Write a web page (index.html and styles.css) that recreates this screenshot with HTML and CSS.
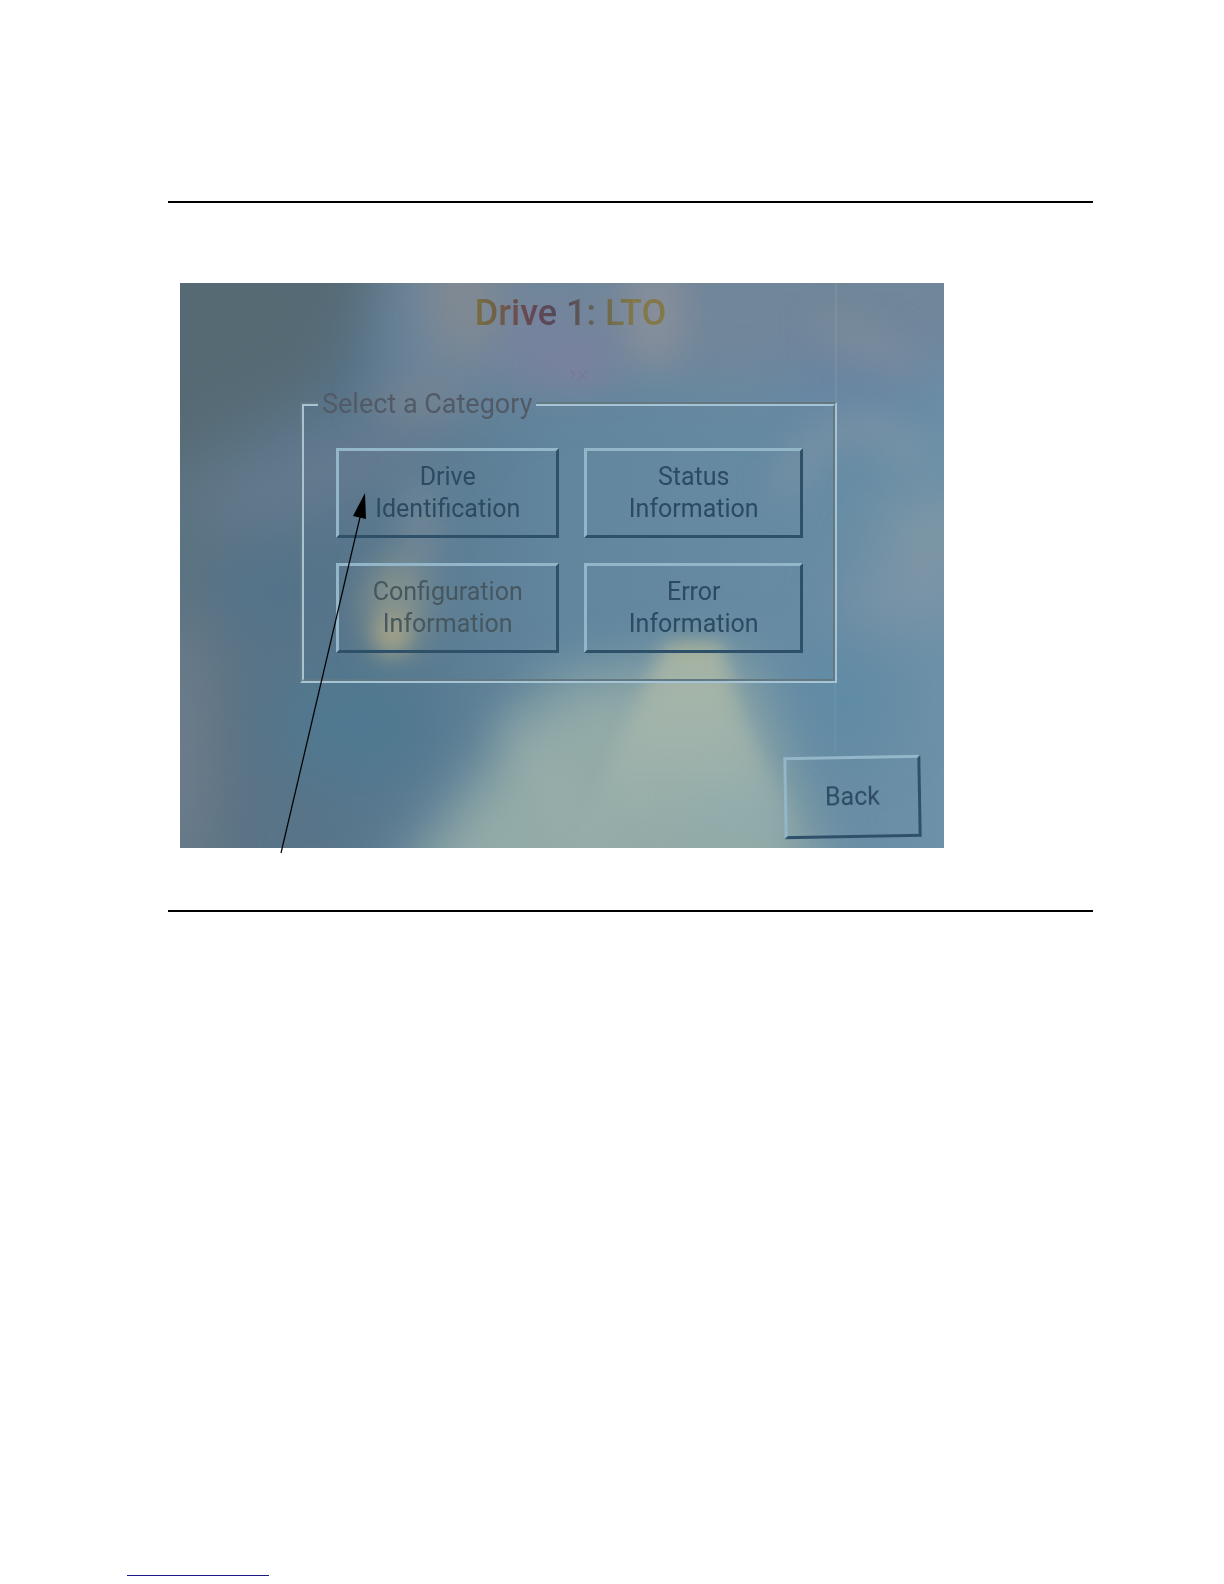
FILE: index.html
```
<!DOCTYPE html>
<html lang="en">
<head>
  <meta charset="UTF-8">
  <title>Drive 1: LTO</title>
  <meta name="viewport" content="width=device-width, initial-scale=1">
  <link rel="stylesheet" href="styles.css">
</head>
<body>

<main class="page">
  <figure class="figure">
    <div class="screen">
      <!-- sky background -->
      <svg class="sky" viewBox="0 0 764 565" preserveAspectRatio="none" aria-hidden="true">
        <defs>
          <linearGradient id="base" x1="0" y1="0" x2="1" y2="0">
            <stop offset="0" stop-color="#5c7381"/>
            <stop offset="0.2" stop-color="#58758b"/>
            <stop offset="0.5" stop-color="#61869e"/>
            <stop offset="0.85" stop-color="#678ca4"/>
            <stop offset="1" stop-color="#6c91a8"/>
          </linearGradient>
          <linearGradient id="beam" x1="0" y1="0" x2="0" y2="1">
            <stop offset="0" stop-color="#b6bda4" stop-opacity="0.75"/>
            <stop offset="0.5" stop-color="#abbaae" stop-opacity="0.5"/>
            <stop offset="1" stop-color="#a3b6b0" stop-opacity="0"/>
          </linearGradient>
          <filter id="soft" x="-60%" y="-60%" width="220%" height="220%" color-interpolation-filters="sRGB"><feGaussianBlur stdDeviation="28"/></filter>
          <filter id="mid" x="-60%" y="-60%" width="220%" height="220%" color-interpolation-filters="sRGB"><feGaussianBlur stdDeviation="18"/></filter>
          <filter id="fine" x="-60%" y="-60%" width="220%" height="220%" color-interpolation-filters="sRGB"><feGaussianBlur stdDeviation="9"/></filter>
        </defs>
        <rect width="764" height="565" fill="url(#base)"/>
        <g filter="url(#soft)">
          <path d="M-60 -60H210L150 100L-60 200Z" fill="#566a74"/>
          <path d="M200 -60H820V60L620 110L460 95L220 125Z" fill="#71869a"/>
          <ellipse cx="150" cy="185" rx="140" ry="26" fill="#687c90" transform="rotate(-20 150 185)"/>
          <ellipse cx="680" cy="100" rx="90" ry="22" fill="#6783a4"/>
          <ellipse cx="750" cy="250" rx="50" ry="35" fill="#8197a4"/>
          <ellipse cx="730" cy="315" rx="70" ry="22" fill="#8295a7"/>
          <ellipse cx="100" cy="310" rx="60" ry="40" fill="#53738a"/>
          <ellipse cx="180" cy="440" rx="80" ry="60" fill="#4f7990"/>
          <ellipse cx="660" cy="420" rx="50" ry="50" fill="#608ba5"/>
          <path d="M370 400L560 370L660 640H190Z" fill="#93aba8"/>
          <ellipse cx="0" cy="470" rx="24" ry="140" fill="#74808f"/>
        </g>
        <g filter="url(#mid)">
          <ellipse cx="285" cy="10" rx="34" ry="60" fill="#8d8c8c" opacity="0.55"/>
          <ellipse cx="475" cy="30" rx="30" ry="55" fill="#94949b" opacity="0.65"/>
          <ellipse cx="375" cy="65" rx="60" ry="35" fill="#7b80a2" opacity="0.5"/>
          <ellipse cx="400" cy="92" rx="34" ry="8" fill="#9b79a0" opacity="0.5"/>
          <ellipse cx="690" cy="62" rx="60" ry="12" fill="#87939c" opacity="0.7" transform="rotate(24 690 62)"/>
          <path d="M600 210Q670 90 740 180" fill="none" stroke="#8a97a7" stroke-width="20" opacity="0.7"/>
          <ellipse cx="215" cy="325" rx="28" ry="48" fill="#9b9f8b" opacity="0.75"/>
          <ellipse cx="240" cy="245" rx="16" ry="50" fill="#87929b" opacity="0.6"/>
          <ellipse cx="235" cy="118" rx="50" ry="16" fill="#7f8590" opacity="0.6"/>
          <path d="M330 430L440 620" stroke="#9fb3ab" stroke-width="40" opacity="0.3"/>
          <ellipse cx="555" cy="525" rx="50" ry="26" fill="#86aab2" opacity="0.5"/>
        </g>
        <g filter="url(#fine)">
          <ellipse cx="212" cy="352" rx="18" ry="20" fill="#b4ac84" opacity="0.6"/>
          <path d="M484 362L542 360L560 430L630 570H390Z" fill="url(#beam)"/>
          <ellipse cx="512" cy="366" rx="24" ry="6" fill="#b9b583" opacity="0.5"/>
        </g>
        <path d="M656 0V120" stroke="#91a0ad" stroke-width="1" opacity="0.6"/>
        <path d="M655 400V470" stroke="#8fb0bc" stroke-width="1" opacity="0.3"/>
        <path d="M390 87l5 4l-5 5M398 88l9 9M407 88l-9 9" fill="none" stroke="#785d8b" stroke-width="1" opacity="0.4"/>
      </svg>

      <h1 class="title">Drive 1: LTO</h1>

      <fieldset class="category">
        <legend>Select a Category</legend>
        <div class="choices">
          <button type="button">Drive<br>Identification</button>
          <button type="button">Status<br>Information</button>
          <button type="button" class="glare">Configuration<br>Information</button>
          <button type="button">Error<br>Information</button>
        </div>
      </fieldset>

      <button type="button" class="back">Back</button>
    </div>

    <!-- callout arrow to Drive Identification -->
    <svg class="callout" viewBox="0 0 90 362" aria-hidden="true">
      <path d="M2 360L82 20" stroke="#000" stroke-width="1.2"/>
      <path d="M86 0L74 23L87 26Z" fill="#000"/>
    </svg>
  </figure>
</main>

<footer class="footer">
  <a class="footer-link" href="#" aria-label="Home"></a>
</footer>

</body>
</html>
```

FILE: styles.css
```
* {
  box-sizing: border-box;
}
body {
  font-family: Roboto, "Liberation Sans", sans-serif;
  background: white;
  margin: 0;
  min-height: 100vh;
  display: flex;
  flex-direction: column;
}
.page {
  padding: 201px 131px 0 168px;
}
.figure {
  position: relative;
  margin: 0;
  padding: 80px 0 62px 12px;
  border-top: 2px solid black;
  border-bottom: 2px solid black;
}
.screen {
  position: relative;
  isolation: isolate;
  max-width: 764px;
  padding: 10px 23px 10px 24px;
  display: flex;
  flex-direction: column;
  background: #5d829a;
}
.sky {
  position: absolute;
  inset: 0;
  width: 100%;
  height: 100%;
  z-index: -1;
}
.title {
  margin: 0 0 55px;
  padding-left: 16px;
  align-self: center;
  font-size: 36px;
  line-height: 40px;
  font-weight: 500;
  color: transparent;
  background: linear-gradient(90deg, #766b42 10%, #694851 32%, #52495c 50%, #6b6650 68%, #82784a 85%);
  background-clip: text;
  -webkit-background-clip: text;
}
.category {
  margin: 0 84px 0 96px;
  padding: 28px 30px 26px 32px;
  min-width: 0;
  border: 4px groove #a5c5d6;
}
.category legend {
  margin-left: -18px;
  padding: 0 4px;
  font-size: 27px;
  line-height: 32px;
  color: #515a66;
}
.choices {
  display: grid;
  grid-template-columns: 224fr 219fr;
  gap: 25px;
}
button {
  font-family: inherit;
  font-size: 25px;
  line-height: 32px;
  color: #2c4a62;
  background: transparent;
  padding: 10px 4px;
  border: 3px solid;
  border-color: #93b6c8 #2f5069 #2f5069 #93b6c8;
  cursor: pointer;
}
button:active {
  border-color: #2f5069 #93b6c8 #93b6c8 #2f5069;
}
.glare {
  color: #46575f;
}
.back {
  align-self: flex-end;
  width: 137px;
  margin-top: 73px;
  padding: 22px 4px;
  transform: rotate(-1deg);
}
.callout {
  position: absolute;
  left: 111px;
  top: 290px;
  width: 90px;
  height: 362px;
  pointer-events: none;
}
.footer {
  margin-top: auto;
  padding: 0 127px 8px;
}
.footer-link {
  display: block;
  width: 142px;
  border-bottom: 1px solid #1a1a80;
}
```
